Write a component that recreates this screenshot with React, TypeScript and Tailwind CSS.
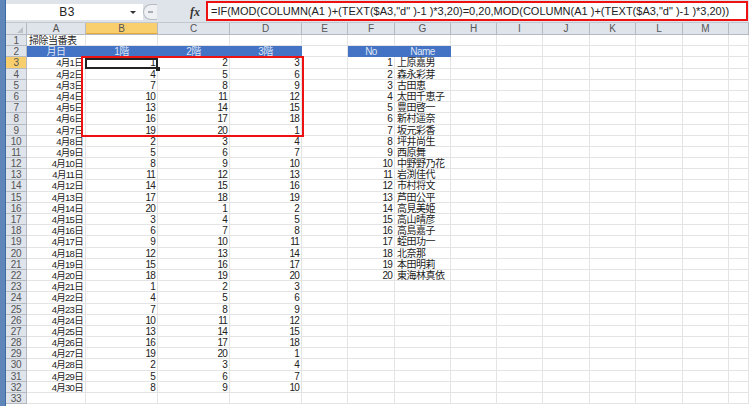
import React from "react";

type Col = { label: string; width: string };
type Cell = { text: string; kind: "empty" | "head" | "date" | "digits" | "name" };

const columns: Col[] = [
    {label: "A", width: "w-[59px]"},
    {label: "B", width: "w-[72px]"},
    {label: "C", width: "w-[72px]"},
    {label: "D", width: "w-[72px]"},
    {label: "E", width: "w-[46px]"},
    {label: "F", width: "w-[47px]"},
    {label: "G", width: "w-[56px]"},
    {label: "H", width: "w-[46px]"},
    {label: "I", width: "w-[46px]"},
    {label: "J", width: "w-[47px]"},
    {label: "K", width: "w-[46px]"},
    {label: "L", width: "w-[47px]"},
    {label: "M", width: "w-[46px]"},
    {label: "", width: "w-[20px]"},
];

const names = [
    "上原嘉男", "森永彩芽", "古田恵", "太田千恵子", "豊田啓一", "新村遥奈", "坂元彩香", "坪井尚生", "西原舞", "中野野乃花",
    "岩渕佳代", "市村将文", "芦田公平", "高見美姫", "高山晴彦", "高島嘉子", "蛭田功一", "北奈那", "本田明莉", "東海林真依",
];

const kindClass: Record<Cell["kind"], string> = {
    empty: "border-[#e4e4e4]",
    head: "bg-[#4472c4] text-[#dfe6f5] border-[#4472c4] text-center text-[10px] tracking-[-0.6px]",
    date: "border-[#e4e4e4] text-right text-[9.5px] tracking-[-0.7px]",
    digits: "border-[#e4e4e4] text-right text-[10px] tracking-[-0.8px]",
    name: "border-[#e4e4e4] text-left text-[10px] tracking-[-0.5px]",
};

const wrap = (n: number) => (n % 20 === 0 ? 20 : n % 20);

const cellText = (row: number, col: number): Cell => {
    if (row === 1) {
        return col === 0 ? {text: "掃除当番表", kind: "name"} : {text: "", kind: "empty"};
    }
    if (row === 2) {
        const heads: Record<number, string> = {0: "月日", 1: "1階", 2: "2階", 3: "3階", 5: "No", 6: "Name"};
        if (heads[col]) return {text: heads[col], kind: "head"};
        return {text: "", kind: "empty"};
    }
    const day = row - 2;
    if (col === 0 && day <= 30) return {text: `4月${day}日`, kind: "date"};
    if (col >= 1 && col <= 3 && day <= 30) {
        return {text: String(wrap(col + (day - 1) * 3)), kind: "digits"};
    }
    if (col === 5 && day <= 20) return {text: String(day), kind: "digits"};
    if (col === 6 && day <= 20) return {text: names[day - 1], kind: "name"};
    return {text: "", kind: "empty"};
};

const rows = Array.from({length: 33}, (_, i) => i + 1);

const App: React.FC = () => {
    return (
        <div className="relative w-[749px] h-[406px] overflow-hidden bg-[#dfe3ea] flex font-['Liberation_Sans','Noto_Sans_CJK_JP',sans-serif] text-[#222]">
            <div className="w-[6px] shrink-0 bg-[#5f86b8] border-r border-[#3f6aa3]"/>
            <div className="flex-1 min-w-0 flex flex-col">
                <div className="h-[23px] shrink-0 flex items-start pt-[4px] bg-[#dfe3ea] border-b border-[#c3c7cf]">
                    <div className="w-[137px] h-[16px] bg-white flex items-center">
                        <span className="w-[122px] text-center text-[12px] tracking-[0.4px]">B3</span>
                        <span className="ml-[2px] w-0 h-0 border-x-[3px] border-x-transparent border-t-[3px] border-t-[#333]"/>
                    </div>
                    <div className="w-[14px] h-[16px] rounded-l-full bg-[#eef0f3] border border-r-0 border-[#b6bbc4] flex items-center justify-center">
                        <span className="w-[5px] h-[2px] bg-[#a8adb5]"/>
                    </div>
                    <div className="w-[44px] h-[16px] flex items-center justify-end pr-[1px] text-[12px] italic font-['Liberation_Serif',serif] font-bold text-[#333]">
                        fx
                    </div>
                </div>
                <div className="h-[12px] shrink-0 flex bg-[#dfe3ea] border-b border-[#b5b9c1] text-[#555] text-[10px] leading-[12px]">
                    <div className="w-[21px] shrink-0 border-r border-[#b5b9c1] relative">
                        <span className="absolute right-[3px] bottom-[1px] w-0 h-0 border-l-[6px] border-l-transparent border-b-[6px] border-b-[#bcc0c7]"/>
                    </div>
                    {columns.map(col => (
                        <div
                            key={col.label || "end"}
                            className={`${col.width} shrink-0 text-center border-r border-[#b5b9c1] ${col.label === "B" ? "bg-[#f9cf6d] border-b border-b-[#e5a83a]" : ""}`}
                        >
                            {col.label}
                        </div>
                    ))}
                </div>
                <div className="flex-1 bg-white">
                    {rows.map(row => (
                        <div key={row} className="h-[11.2px] flex">
                            <div className={`w-[21px] shrink-0 border-r border-b border-[#b5b9c1] text-center text-[10px] tracking-[-0.4px] leading-[11.2px] text-[#555] ${row === 3 ? "bg-[#f9cf6d]" : "bg-[#dfe3ea]"}`}>
                                {row}
                            </div>
                            {columns.map((col, idx) => {
                                const cell = cellText(row, idx);
                                return (
                                    <div
                                        key={col.label || "end"}
                                        className={`${col.width} shrink-0 h-full px-[2px] leading-[12px] whitespace-nowrap overflow-visible border-r border-b ${kindClass[cell.kind]}`}
                                    >
                                        {cell.text}
                                    </div>
                                );
                            })}
                        </div>
                    ))}
                </div>
            </div>

            {/* red callouts and the selected cell sit on top of the sheet */}
            <div className="absolute left-[206px] top-[1px] w-[542px] h-[20px] bg-white border-2 border-[#ee1111] flex items-center pl-[3px] text-[11px] text-[#222] whitespace-nowrap overflow-hidden">
                =IF(MOD(COLUMN(A1 )+(TEXT($A3,"d" )-1 )*3,20)=0,20,MOD(COLUMN(A1 )+(TEXT($A3,"d" )-1 )*3,20))
            </div>
            <div className="absolute left-[85px] top-[58px] w-[73px] h-[11px] border-2 border-[#222]"/>
            <div className="absolute left-[156px] top-[67px] w-[4px] h-[4px] bg-[#222]"/>
            <div className="absolute left-[81px] top-[56px] w-[223px] h-[81px] border-2 border-[#ee1111]"/>
        </div>
    );
};

export default App;
